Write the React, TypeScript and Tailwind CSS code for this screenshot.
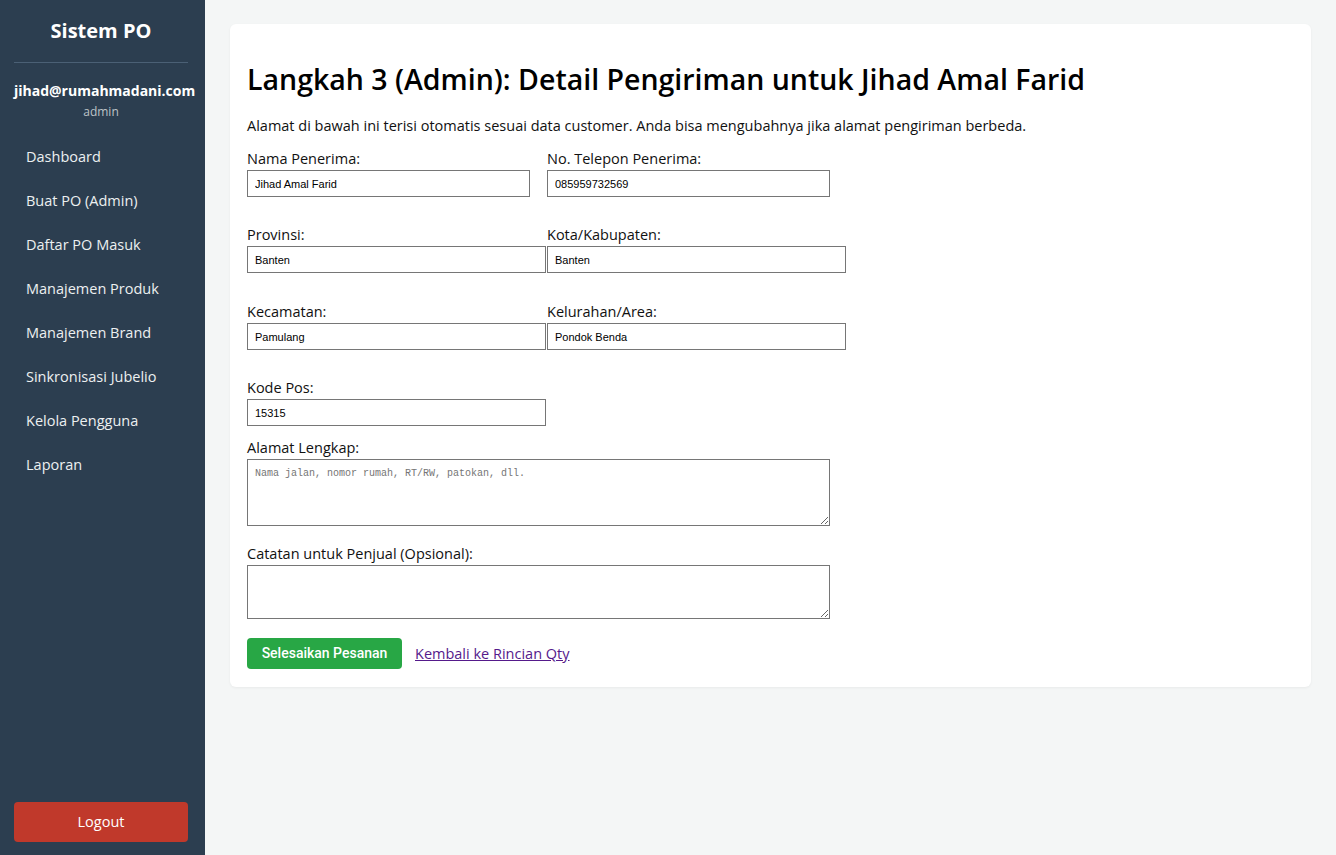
import React, { useState } from 'react';

const navItems = [
  'Dashboard',
  'Buat PO (Admin)',
  'Daftar PO Masuk',
  'Manajemen Produk',
  'Manajemen Brand',
  'Sinkronisasi Jubelio',
  'Kelola Pengguna',
  'Laporan',
];

const inputCls =
  'block h-[27px] border border-[#767676] bg-white px-[7px] text-[11px] text-black outline-none [font-family:"Liberation_Sans",Arial,sans-serif]';

const Field: React.FC<{ label: string; value: string; width: string; onChange: (v: string) => void }> = ({
  label,
  value,
  width,
  onChange,
}) => (
  <div className="flex flex-col">
    <label className="mb-[1px] text-[14.5px] leading-[21px] text-[#111]">{label}</label>
    <input value={value} onChange={(e) => onChange(e.target.value)} className={`${inputCls} ${width}`} />
  </div>
);

export default function App() {
  const [form, setForm] = useState({
    nama: 'Jihad Amal Farid',
    telepon: '085959732569',
    provinsi: 'Banten',
    kota: 'Banten',
    kecamatan: 'Pamulang',
    kelurahan: 'Pondok Benda',
    kodePos: '15315',
    alamat: '',
    catatan: '',
  });

  const set = (key: keyof typeof form) => (v: string) => setForm((prev) => ({ ...prev, [key]: v }));

  return (
    <div className='flex min-h-[855px] w-full bg-[#f4f6f6] [font-family:"Open_Sans",sans-serif]'>
      {/* Sidebar */}
      <aside className="flex w-[205px] shrink-0 flex-col bg-[#2c3e50] pb-[13px] pl-[14px] pr-[17px] pt-[17px] text-[#ecf0f1]">
        <h2 className="text-center text-[20px] font-bold leading-[28px] text-white">Sistem PO</h2>
        <div className="mt-[17px] h-px bg-[#4b6075]" />
        <div className="mt-[18px] text-center">
          <div className="text-[14px] font-bold leading-[20px] text-white">jihad@rumahmadani.com</div>
          <div className="mt-[2px] text-[12px] leading-[18px] text-[#bdc3c7]">admin</div>
        </div>
        <nav className="mt-[26px] flex flex-col">
          {navItems.map((item) => (
            <a key={item} href="#" className="block h-[44px] px-[12px] text-[14.5px] leading-[20px] text-[#ecf0f1]">
              {item}
            </a>
          ))}
        </nav>
        <button className="mt-auto h-[40px] w-full rounded-[4px] bg-[#c0392b] text-[14.5px] text-white">Logout</button>
      </aside>

      {/* Main */}
      <main className="flex-1 px-[25px] pt-[24px]">
        <div className="rounded-[6px] bg-white px-[17px] pb-[18px] pt-[36px] shadow-[0_1px_3px_rgba(0,0,0,0.05)]">
          <h1 className="text-[28.5px] font-semibold leading-[38px] text-black">
            Langkah 3 (Admin): Detail Pengiriman untuk Jihad Amal Farid
          </h1>
          <p className="mt-[18px] text-[14.5px] leading-[20px] text-[#111]">
            Alamat di bawah ini terisi otomatis sesuai data customer. Anda bisa mengubahnya jika alamat pengiriman
            berbeda.
          </p>

          <div className="mt-[12px] flex gap-[17px]">
            <Field label="Nama Penerima:" value={form.nama} width="w-[283px]" onChange={set('nama')} />
            <Field label="No. Telepon Penerima:" value={form.telepon} width="w-[283px]" onChange={set('telepon')} />
          </div>

          <div className="mt-[27px] flex gap-[1px]">
            <Field label="Provinsi:" value={form.provinsi} width="w-[299px]" onChange={set('provinsi')} />
            <Field label="Kota/Kabupaten:" value={form.kota} width="w-[299px]" onChange={set('kota')} />
          </div>

          <div className="mt-[28px] flex gap-[1px]">
            <Field label="Kecamatan:" value={form.kecamatan} width="w-[299px]" onChange={set('kecamatan')} />
            <Field label="Kelurahan/Area:" value={form.kelurahan} width="w-[299px]" onChange={set('kelurahan')} />
          </div>

          <div className="mt-[27px]">
            <Field label="Kode Pos:" value={form.kodePos} width="w-[299px]" onChange={set('kodePos')} />
          </div>

          <div className="mt-[11px] flex flex-col">
            <label className="mb-[1px] text-[14.5px] leading-[21px] text-[#111]">Alamat Lengkap:</label>
            <textarea
              value={form.alamat}
              onChange={(e) => set('alamat')(e.target.value)}
              placeholder="Nama jalan, nomor rumah, RT/RW, patokan, dll."
              className='block h-[67px] w-[583px] border border-[#767676] px-[7px] py-[6px] text-[10px] text-black outline-none placeholder:text-[#757575] [font-family:"Liberation_Mono",monospace]'
            />
          </div>

          <div className="mt-[17px] flex flex-col">
            <label className="mb-[1px] text-[14.5px] leading-[21px] text-[#111]">Catatan untuk Penjual (Opsional):</label>
            <textarea
              value={form.catatan}
              onChange={(e) => set('catatan')(e.target.value)}
              className='block h-[54px] w-[583px] border border-[#767676] px-[7px] py-[6px] text-[10px] text-black outline-none [font-family:"Liberation_Mono",monospace]'
            />
          </div>

          <div className="mt-[19px] flex items-center gap-[13px]">
            <button className="h-[31px] w-[155px] rounded-[4px] bg-[#28a745] text-[14px] font-medium text-white [font-family:Roboto,sans-serif]">
              Selesaikan Pesanan
            </button>
            <a href="#" className="text-[14.5px] text-[#551a8b] underline">
              Kembali ke Rincian Qty
            </a>
          </div>
        </div>
      </main>
    </div>
  );
}
